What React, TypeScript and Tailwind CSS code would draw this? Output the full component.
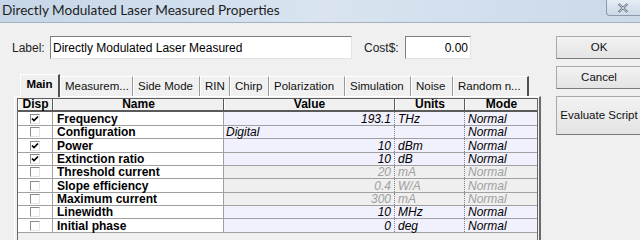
// Properties dialog: title bar, label/cost row, tab strip and parameter grid.

import * as React from "react";

type Row = {
  name: string;
  disp: boolean;
  value: string;
  units: string;
  mode: string;
  disabled?: boolean;
  text?: boolean;
  h: string;
};

const ROWS: Row[] = [
  { name: "Frequency", disp: true, value: "193.1", units: "THz", mode: "Normal", h: "h-[14px]" },
  { name: "Configuration", disp: false, value: "Digital", units: "", mode: "Normal", text: true, h: "h-[13px]" },
  { name: "Power", disp: true, value: "10", units: "dBm", mode: "Normal", h: "h-[14px]" },
  { name: "Extinction ratio", disp: true, value: "10", units: "dB", mode: "Normal", h: "h-[13px]" },
  { name: "Threshold current", disp: false, value: "20", units: "mA", mode: "Normal", disabled: true, h: "h-[13px]" },
  { name: "Slope efficiency", disp: false, value: "0.4", units: "W/A", mode: "Normal", disabled: true, h: "h-[14px]" },
  { name: "Maximum current", disp: false, value: "300", units: "mA", mode: "Normal", disabled: true, h: "h-[13px]" },
  { name: "Linewidth", disp: false, value: "10", units: "MHz", mode: "Normal", h: "h-[13px]" },
  { name: "Initial phase", disp: false, value: "0", units: "deg", mode: "Normal", h: "h-[14px]" },
];

const TABS = [
  { label: "Main", w: "w-[40px]" },
  { label: "Measurem...", w: "w-[73px]" },
  { label: "Side Mode", w: "w-[67px]" },
  { label: "RIN", w: "w-[30px]" },
  { label: "Chirp", w: "w-[39px]" },
  { label: "Polarization", w: "w-[76px]" },
  { label: "Simulation", w: "w-[66px]" },
  { label: "Noise", w: "w-[42px]" },
  { label: "Random n...", w: "w-[76px]" },
];

function Check({ on }: { on: boolean }) {
  return (
    <span className="flex h-[10px] w-[10px] items-center justify-center border-t border-l border-[#8a8a8a] border-r-[#e4e4e4] border-b-[#e4e4e4] border-r border-b bg-white">
      {on && (
        <svg width="8" height="8" viewBox="0 0 8 8">
          <polyline points="1,3.5 3,5.5 7,1.5" fill="none" stroke="#000" strokeWidth="1.7" />
        </svg>
      )}
    </span>
  );
}

function Button({ children, h }: { children: React.ReactNode; h: string }) {
  return (
    <div
      className={`flex w-[86px] items-center justify-center border border-[#a9a9a9] border-b-[#7a7a7a] bg-gradient-to-b from-[#f2f2f2] to-[#e4e4e4] text-[11.5px] text-[#111] ${h}`}
    >
      {children}
    </div>
  );
}

export default function App() {
  return (
    <div className="h-[240px] w-[640px] overflow-hidden bg-[#f0f0f0] font-['Liberation_Sans',Arial,sans-serif] text-black">
      {/* title bar */}
      <div className="relative flex h-[23px] items-center border-b border-[#a4b3c4] bg-gradient-to-r from-[#c6d6e8] via-[#d9e4f0] to-[#cbd9e8] pl-[2px]">
        <span className="font-['Lato',sans-serif] text-[13.6px] leading-none text-[#1e1e1e]">
          Directly Modulated Laser Measured Properties
        </span>
        <div className="absolute top-0 right-[-4px] flex h-[16px] w-[38px] items-center justify-center rounded-bl-[4px] border-b border-l border-[#8b9aab] bg-gradient-to-b from-[#e6edf5] to-[#cdd9e6]">
          <svg width="12" height="10" viewBox="0 0 12 10" className="mr-[6px]">
            <path d="M1.5 1 L10.5 9 M10.5 1 L1.5 9" stroke="#5a6a7c" strokeWidth="2.2" />
            <path d="M1.5 1 L10.5 9 M10.5 1 L1.5 9" stroke="#f4f7fb" strokeWidth="0.8" />
          </svg>
        </div>
      </div>

      <div className="flex">
        {/* left side */}
        <div className="w-[556px] shrink-0">
          <div className="mt-[13px] flex h-[23px] items-center text-[12px]">
            <span className="ml-[12px] w-[38px] text-[#222]">Label:</span>
            <div className="flex h-[23px] w-[302px] items-center border-t border-l border-[#7f7f7f] border-r border-b border-r-[#e3e3e3] border-b-[#e3e3e3] bg-white pl-[2px]">
              Directly Modulated Laser Measured
            </div>
            <span className="ml-[12px] w-[41px] text-[#222]">Cost$:</span>
            <div className="flex h-[23px] w-[66px] items-center justify-end border-t border-l border-[#7f7f7f] border-r border-b border-r-[#e3e3e3] border-b-[#e3e3e3] bg-white pr-[2px]">
              0.00
            </div>
          </div>

          {/* tabs */}
          <div className="mt-[15px] ml-[20px] flex h-[22px] items-end text-[11.5px]">
            {TABS.map((t, i) =>
              i === 0 ? (
                <div
                  key={t.label}
                  className={`relative z-10 mb-[-1px] flex h-[23px] items-center justify-center border-t border-l border-white border-r-2 border-r-[#505050] bg-[#f0f0f0] pb-[2px] font-bold ${t.w}`}
                >
                  {t.label}
                </div>
              ) : (
                <div
                  key={t.label}
                  className={`flex h-[20px] items-center border-t border-l border-white border-r border-r-[#9a9a9a] pl-[4px] text-[#111] ${t.w} ${i === TABS.length - 1 ? "border-r-2 border-r-[#505050]" : ""}`}
                >
                  {t.label}
                </div>
              ),
            )}
          </div>

          {/* tab panel */}
          <div className="ml-[14px] h-[200px] w-[527px] border-t border-l border-white border-r-2 border-r-[#6a6a6a] pt-[1px] pl-[2px]">
            <div className="h-[200px] w-[521px] border-l border-r border-[#6a6a6a] text-[12px]">
              {/* header */}
              <div className="grid h-[14px] grid-cols-[35px_171px_171px_70px_72px] border-t border-b-2 border-[#5a5a5a] font-bold leading-[11px]">
                {["Disp", "Name", "Value", "Units", "Mode"].map((h, i) => (
                  <div
                    key={h}
                    className={`flex items-center justify-center border-l border-white bg-[#f0f0f0] ${i < 4 ? "border-r border-r-[#5a5a5a]" : ""}`}
                  >
                    {h}
                  </div>
                ))}
              </div>
              {ROWS.map((r) => {
                const val = r.disabled ? "bg-[#efefef] text-[#a0a0a0]" : "bg-[#f1f1fd] text-black";
                return (
                  <div
                    key={r.name}
                    className={`grid grid-cols-[35px_171px_171px_70px_72px] border-b border-[#a0a0a0] leading-none ${r.h}`}
                  >
                    <div className="flex items-center justify-center border-r border-[#a0a0a0] bg-white">
                      <Check on={r.disp} />
                    </div>
                    <div className="flex items-center border-r border-[#a0a0a0] bg-white pl-[4px] font-bold">
                      {r.name}
                    </div>
                    <div
                      className={`flex items-center border-r border-dotted border-[#808080] italic ${val} ${r.text ? "justify-start pl-[2px]" : "justify-end pr-[3px]"}`}
                    >
                      {r.value}
                    </div>
                    <div className={`flex items-center border-r border-dotted border-[#808080] pl-[3px] italic ${val}`}>
                      {r.units}
                    </div>
                    <div className={`flex items-center pl-[3px] italic ${val}`}>{r.mode}</div>
                  </div>
                );
              })}
            </div>
          </div>
        </div>

        {/* buttons */}
        <div className="mt-[13px] flex flex-col gap-[7px]">
          <Button h="h-[23px]">OK</Button>
          <Button h="h-[23px]">Cancel</Button>
          <Button h="h-[39px]">
            <span className="whitespace-nowrap">Evaluate Script</span>
          </Button>
        </div>
      </div>
    </div>
  );
}
